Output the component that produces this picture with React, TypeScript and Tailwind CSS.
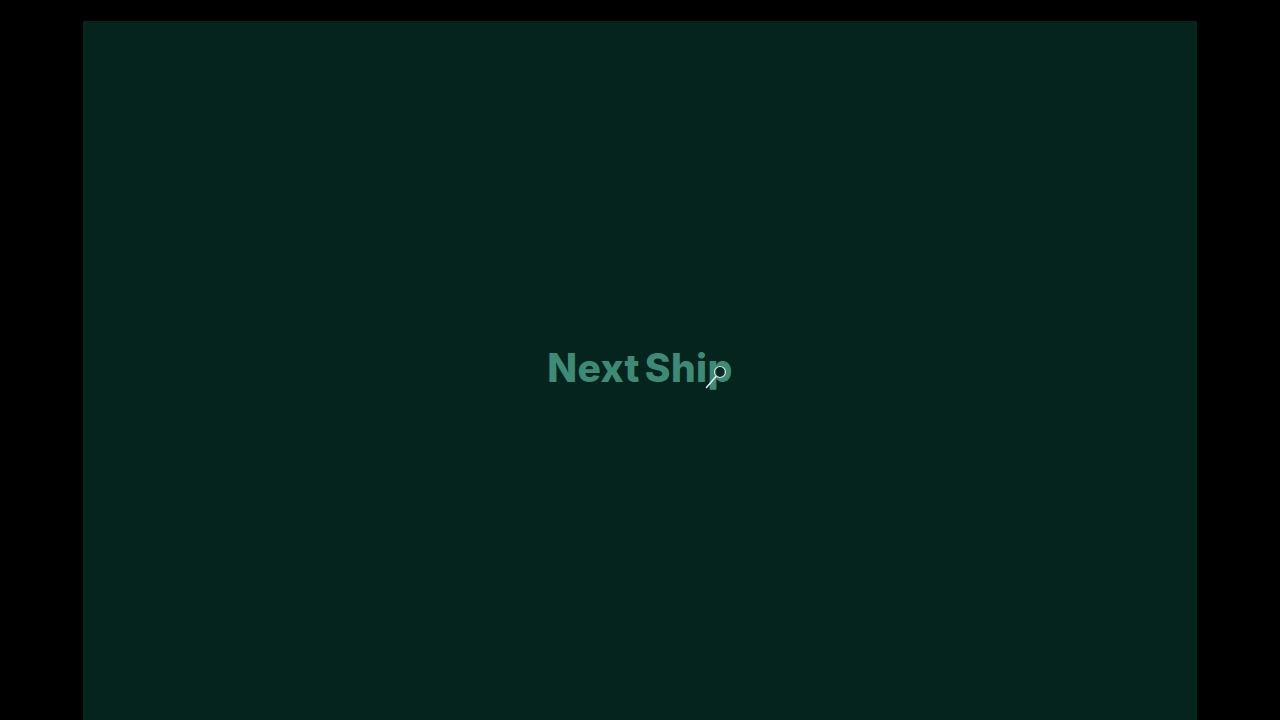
export default function App() {
  return (
    <div className="h-screen overflow-hidden bg-black px-[83px] pt-[21px]">
      <div className="flex h-full items-center justify-center bg-[#06241e] pb-[6px]">
        <div className="relative">
          <h1 className="flex gap-[5px] font-['Inter',sans-serif] text-[39px] leading-none font-extrabold tracking-[0.35px] text-[#3f8a77]">
            <span>Next</span>
            <span>Ship</span>
          </h1>
          {/* magnifier cursor sitting over the last letter */}
          <svg
            viewBox="0 0 28 28"
            className="absolute top-[16px] right-[2px] h-7 w-7"
            fill="none"
          >
            <circle cx="17" cy="8" r="5.5" stroke="#d5e2dd" strokeWidth="1.2" fill="#0b2b25" fillOpacity="0.6" />
            <path d="M13 12.5 L3.5 23.5" stroke="#e8efec" strokeWidth="1.5" strokeLinecap="round" />
          </svg>
        </div>
      </div>
    </div>
  );
}
